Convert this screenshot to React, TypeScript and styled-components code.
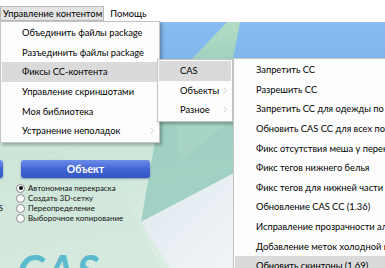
import React from 'react';
import styled, { createGlobalStyle } from 'styled-components';

const GlobalStyle = createGlobalStyle`
  html, body {
    margin: 0;
    padding: 0;
    background: #ffffff;
  }
  body {
    font-family: Lato, "Liberation Sans", sans-serif;
    color: #000;
  }
`;

const Screen = styled.div`
  position: relative;
  width: 385px;
  height: 268px;
  overflow: hidden;
  display: flex;
  flex-direction: column;
`;

const MenuBar = styled.div`
  height: 22px;
  flex: none;
  display: flex;
  align-items: flex-end;
  background: #ffffff;
  font-size: 9.3px;
`;

const TopItem = styled.div<{ $active?: boolean }>`
  height: 15px;
  margin-bottom: 1px;
  display: flex;
  align-items: center;
  padding: 0 ${(p) => (p.$active ? '1px 0 2px' : '4px 0 5px')};
  box-sizing: border-box;
  border: 1px solid ${(p) => (p.$active ? '#b9b9b9' : 'transparent')};
  background: ${(p) => (p.$active ? '#e3e3e3' : 'transparent')};
  white-space: nowrap;
`;

const Workspace = styled.div`
  position: relative;
  flex: 1;
  overflow: hidden;
`;

const Backdrop = styled.svg`
  position: absolute;
  inset: 0;
  width: 100%;
  height: 100%;
`;

const Tools = styled.div`
  position: relative;
  display: flex;
  gap: 18px;
  margin-left: -115px;
  padding-top: 138px;
`;

const ToolColumn = styled.div<{ $width: number }>`
  width: ${(p) => p.$width}px;
  display: flex;
  flex-direction: column;
`;

const BlueButton = styled.div`
  height: 18px;
  border-radius: 3px;
  background: linear-gradient(#6d8cea, #3f62d2 55%, #3456c4);
  box-shadow: 0 1px 2px rgba(30, 50, 120, 0.45);
  color: #fff;
  font-weight: 700;
  font-size: 10.5px;
  display: flex;
  align-items: center;
  justify-content: center;
`;

const RadioList = styled.div<{ $align?: string }>`
  margin-top: 5px;
  margin-left: -5px;
  display: flex;
  flex-direction: column;
  align-items: ${(p) => p.$align || 'flex-start'};
`;

const RadioRow = styled.div`
  height: 10px;
  line-height: 10px;
  display: flex;
  align-items: center;
  gap: 3px;
  font-size: 7.9px;
  color: #111;
  white-space: nowrap;
`;

const RadioDot = styled.span<{ $checked?: boolean }>`
  width: 9px;
  height: 9px;
  flex: none;
  box-sizing: border-box;
  border-radius: 50%;
  border: 1px solid #8a8a8a;
  background: #fff;
  display: flex;
  align-items: center;
  justify-content: center;
  &::after {
    content: '';
    width: 4px;
    height: 4px;
    border-radius: 50%;
    background: ${(p) => (p.$checked ? '#111' : 'transparent')};
  }
`;

const Logo = styled.div`
  position: relative;
  margin: 25px 0 0 -4px;
  font-size: 44px;
  line-height: 1;
  font-weight: 700;
  font-style: italic;
  letter-spacing: 2px;
  color: #5bbacb;
`;

const Menu = styled.div<{ $left: number; $top: number; $width: number }>`
  position: absolute;
  left: ${(p) => p.$left}px;
  top: ${(p) => p.$top}px;
  width: ${(p) => p.$width}px;
  box-sizing: border-box;
  padding: 1px 1px;
  background: #fdfdfd;
  border: 1px solid #c4c4c4;
  box-shadow: 2px 2px 3px rgba(0, 0, 0, 0.28);
  font-size: 9.3px;
`;

const MenuItem = styled.div<{ $active?: boolean; $indent: number }>`
  height: 19.6px;
  display: flex;
  align-items: center;
  padding-left: ${(p) => p.$indent}px;
  padding-right: 4px;
  background: ${(p) => (p.$active ? '#dadada' : 'transparent')};
  white-space: nowrap;
  overflow: hidden;
`;

const ItemLabel = styled.span`
  flex: 1;
`;

const Chevron = () => (
  <svg width="4" height="7" viewBox="0 0 4 7">
    <path d="M0.5 0.5 L3.5 3.5 L0.5 6.5" fill="none" stroke="#cfcfcf" strokeWidth="1" />
  </svg>
);

const mainItems = [
  { label: 'Объединить файлы package' },
  { label: 'Разъединить файлы package' },
  { label: 'Фиксы CC-контента', sub: true, active: true },
  { label: 'Управление скриншотами' },
  { label: 'Моя библиотека' },
  { label: 'Устранение неполадок', sub: true },
];

const fixGroups = [
  { label: 'CAS', active: true },
  { label: 'Объекты' },
  { label: 'Разное' },
];

const casFixes = [
  'Запретить СС',
  'Разрешить СС',
  'Запретить СС для одежды по умолчанию',
  'Обновить CAS CC для всех полов',
  'Фикс отсутствия меша у перекрасок',
  'Фикс тегов нижнего белья',
  'Фикс тегов для нижней части купальников',
  'Обновление CAS CC (1.36)',
  'Исправление прозрачности альфа-волос',
  'Добавление меток холодной и жаркой погоды',
  'Обновить скинтоны (1.69)',
];

const modes = ['Автономная перекраска', 'Создать 3D-сетку', 'Переопределение', 'Выборочное копирование'];

export default function App() {
  return (
    <Screen>
      <GlobalStyle />
      <MenuBar>
        <TopItem $active>Управление контентом</TopItem>
        <TopItem>Помощь</TopItem>
      </MenuBar>

      <Workspace>
        <Backdrop viewBox="0 0 385 246" preserveAspectRatio="none">
          <defs>
            <linearGradient id="base" x1="0" y1="0" x2="0.3" y2="1">
              <stop offset="0" stopColor="#a5d3c6" />
              <stop offset="0.55" stopColor="#cde6d9" />
              <stop offset="1" stopColor="#dcede4" />
            </linearGradient>
            <linearGradient id="sky" x1="0" y1="0" x2="0" y2="1">
              <stop offset="0" stopColor="#86bcef" />
              <stop offset="1" stopColor="#7bb3ec" />
            </linearGradient>
            <linearGradient id="mint" x1="0" y1="0" x2="0" y2="1">
              <stop offset="0" stopColor="#b4dcc4" />
              <stop offset="1" stopColor="#9fd2c0" />
            </linearGradient>
            <linearGradient id="pale" x1="0" y1="0" x2="1" y2="1">
              <stop offset="0" stopColor="#dfe9ee" />
              <stop offset="1" stopColor="#f1f4f8" />
            </linearGradient>
          </defs>
          <rect x="0" y="0" width="385" height="246" fill="url(#base)" />
          <polygon points="0,0 385,0 385,60 240,37 0,37" fill="url(#sky)" />
          <polygon points="227,0 240,0 233,37 192,37" fill="url(#mint)" />
          <polygon points="160,90 236,90 236,150 141,200" fill="#93cbbd" opacity="0.8" />
          <polygon points="175,93 236,93 180,140" fill="#a9d6c6" opacity="0.7" />
          <polygon points="236,150 141,200 170,246 236,246" fill="url(#pale)" />
          <polygon points="0,121 100,121 160,246 0,246" fill="#cfe6d9" opacity="0.5" />
          <polygon points="236,60 385,60 385,246 236,246" fill="#e3e7ea" />
        </Backdrop>

        <Tools>
          <ToolColumn $width={118}>
            <BlueButton>Кастом</BlueButton>
            <RadioList $align="flex-end">
              <RadioRow />
              <RadioRow />
              <RadioRow>CAS</RadioRow>
              <RadioRow />
            </RadioList>
          </ToolColumn>
          <ToolColumn $width={129}>
            <BlueButton>Объект</BlueButton>
            <RadioList>
              {modes.map((m, i) => (
                <RadioRow key={m}>
                  <RadioDot $checked={i === 0} />
                  {m}
                </RadioRow>
              ))}
            </RadioList>
            <Logo>CAS</Logo>
          </ToolColumn>
        </Tools>
      </Workspace>

      <Menu $left={0} $top={21} $width={160}>
        {mainItems.map((it) => (
          <MenuItem key={it.label} $indent={20} $active={it.active}>
            <ItemLabel>{it.label}</ItemLabel>
            {it.sub && <Chevron />}
          </MenuItem>
        ))}
      </Menu>

      <Menu $left={157} $top={59} $width={76}>
        {fixGroups.map((it) => (
          <MenuItem key={it.label} $indent={21} $active={it.active}>
            <ItemLabel>{it.label}</ItemLabel>
            <Chevron />
          </MenuItem>
        ))}
      </Menu>

      <Menu $left={233} $top={58} $width={170}>
        {casFixes.map((label, i) => (
          <MenuItem key={label} $indent={21} $active={i === casFixes.length - 1}>
            <ItemLabel>{label}</ItemLabel>
          </MenuItem>
        ))}
      </Menu>
    </Screen>
  );
}
